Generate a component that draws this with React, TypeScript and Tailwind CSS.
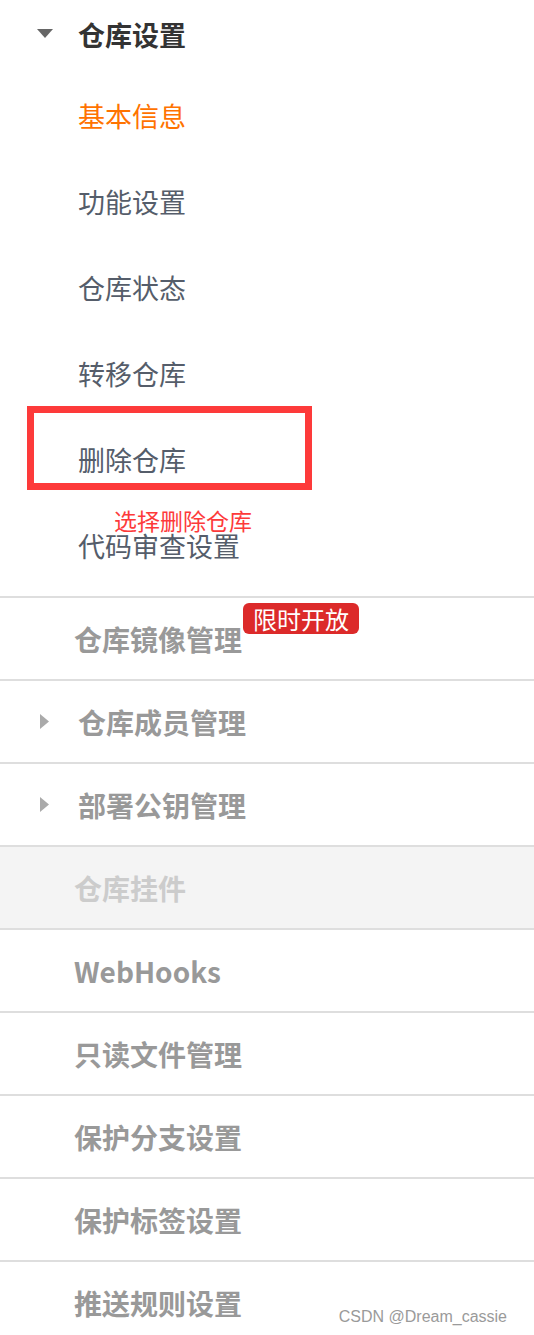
import React from 'react'

const subItems = ['基本信息', '功能设置', '仓库状态', '转移仓库', '删除仓库', '代码审查设置']

type Row = {
  label: string
  arrow?: boolean
  badge?: string
  disabled?: boolean
}

const rows: Row[] = [
  { label: '仓库镜像管理', badge: '限时开放' },
  { label: '仓库成员管理', arrow: true },
  { label: '部署公钥管理', arrow: true },
  { label: '仓库挂件', disabled: true },
  { label: 'WebHooks' },
  { label: '只读文件管理' },
  { label: '保护分支设置' },
  { label: '保护标签设置' },
  { label: '推送规则设置' },
]

const font = { fontFamily: '"Noto Sans CJK SC", "Noto Sans", sans-serif' }

function CaretDown() {
  return (
    <svg width="16" height="9" viewBox="0 0 16 9" className="shrink-0">
      <path d="M0 0 H16 L8 9 Z" fill="#666" />
    </svg>
  )
}

function CaretRight() {
  return (
    <svg width="9" height="15" viewBox="0 0 9 15" className="shrink-0">
      <path d="M0 0 L9 7.5 L0 15 Z" fill="#aaa" />
    </svg>
  )
}

export default function App() {
  return (
    <div className="relative w-[534px] h-[1335px] overflow-hidden bg-white" style={font}>
      {/* 仓库设置 group */}
      <div className="flex items-center h-[68px]">
        <div className="w-[78px] flex pl-[37px] pb-[2px]">
          <CaretDown />
        </div>
        <span className="text-[27px] leading-none font-bold text-[#333]">仓库设置</span>
      </div>
      <div className="flex flex-col pt-[4px]">
        {subItems.map((s, i) => (
          <div key={s} className="h-[86px] flex items-center pl-[78px]">
            <span className={`text-[27px] leading-none ${i === 0 ? 'text-[#ff7300]' : 'text-[#555d6a]'}`}>{s}</span>
          </div>
        ))}
      </div>

      <div className="flex flex-col mt-[8px]">
        {rows.map((r) => (
          <div
            key={r.label}
            className={`h-[83px] border-t-2 border-[#dedede] flex items-center ${r.disabled ? 'bg-[#f4f4f4]' : ''}`}
          >
            {r.arrow ? (
              <div className="w-[78px] flex pl-[40px]">
                <CaretRight />
              </div>
            ) : (
              <div className="w-[74px]" />
            )}
            <span
              className={`relative text-[28px] leading-none font-bold ${r.disabled ? 'text-[#cccccc]' : 'text-[#999999]'}`}
            >
              {r.label}
              {r.badge && (
                <span className="absolute left-full top-[-22px] ml-[1px] h-[31px] px-[10px] rounded-[6px] bg-[#dc2a2a] text-white text-[24px] font-normal leading-[31px] whitespace-nowrap">
                  {r.badge}
                </span>
              )}
            </span>
          </div>
        ))}
      </div>

      {/* annotation */}
      <div className="absolute left-[27px] top-[406px] w-[285px] h-[84px] border-[7px] border-[#fd3a3a]" />
      <div className="absolute left-[114px] top-[509px] text-[23px] leading-none text-[#fd3a3a]">选择删除仓库</div>

      <div
        className="absolute right-[27px] bottom-[10px] text-[16px] leading-none text-[#9a9a9a]"
        style={{ fontFamily: '"Liberation Sans", Arial, sans-serif' }}
      >
        CSDN @Dream_cassie
      </div>
    </div>
  )
}
